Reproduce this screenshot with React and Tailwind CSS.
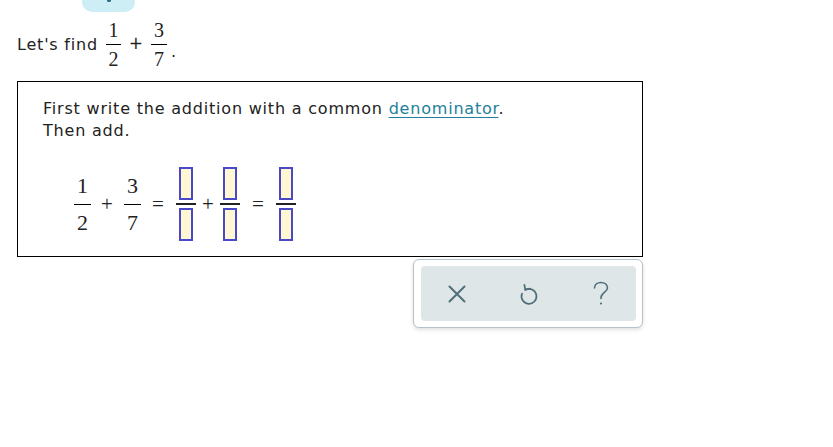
import React from "react";

const serif = { fontFamily: '"Liberation Serif", "Times New Roman", serif' };

function Frac({ n, d, w, gap, cls = "" }) {
  return (
    <span className={`inline-flex flex-col items-center ${gap} ${cls}`} style={serif}>
      <span className="leading-none">{n}</span>
      <span className={`h-px bg-black ${w}`} />
      <span className="leading-none">{d}</span>
    </span>
  );
}

function BoxFrac({ cls = "" }) {
  return (
    <span className={`inline-flex flex-col items-center gap-[3px] w-[20px] ${cls}`}>
      <span className="w-[14px] h-[33px] border-2 border-[#4a48c4] bg-[#fff8d2]" />
      <span className="h-[2px] bg-[#222] w-[20px]" />
      <span className="w-[14px] h-[33px] border-2 border-[#4a48c4] bg-[#fff8d2]" />
    </span>
  );
}

function Op({ c, cls }) {
  return (
    <span className={`w-[14px] flex justify-center text-[21px] leading-none ${cls}`} style={serif}>
      {c}
    </span>
  );
}

export default function App() {
  return (
    <div
      className="w-[833px] h-[447px] bg-white text-[#222] relative overflow-hidden"
      style={{ fontFamily: '"DejaVu Sans", Verdana, sans-serif' }}
    >
      <div className="absolute left-[82px] top-[-10px] w-[53px] h-[22px] rounded-[10px] bg-[#cdeef5] flex items-end justify-center pb-[10px]">
        <span className="w-[4px] h-[3px] rounded-full bg-[#2a6f80]" />
      </div>

      <div className="pt-[17px] pl-[17px] h-[72px] flex items-center text-[16px] tracking-[0.8px]">
        <span>Let's find</span>
        <span className="ml-[8px] text-[20px] flex items-center tracking-normal">
          <Frac n="1" d="2" w="w-[15px]" gap="gap-[4px]" />
          <span className="w-[14px] mx-[8px] flex justify-center text-[17px] leading-none mb-[2px]">+</span>
          <Frac n="3" d="7" w="w-[16px]" gap="gap-[4px]" />
          <span className="ml-[4px] mt-[14px] text-[16px] leading-none">.</span>
        </span>
      </div>

      <div className="ml-[17px] mt-[9px] w-[626px] h-[176px] border border-black pl-[25px] pt-[16px]">
        <p className="text-[16px] leading-[22px] tracking-[0.8px]">
          First write the addition with a common{" "}
          <span className="text-[#23809a] underline underline-offset-[3px]">denominator</span>.
          <br />
          Then add.
        </p>
        <div className="mt-[25px] ml-[31px] h-[74px] flex items-center text-[22px]">
          <Frac n="1" d="2" w="w-[17px]" gap="gap-[7px]" />
          <Op c="+" cls="ml-[9px]" />
          <Frac n="3" d="7" w="w-[17px]" gap="gap-[7px]" cls="ml-[10px]" />
          <Op c="=" cls="ml-[10px]" />
          <BoxFrac cls="ml-[11px]" />
          <Op c="+" cls="ml-[5px]" />
          <BoxFrac cls="ml-[5px]" />
          <Op c="=" cls="ml-[11px]" />
          <BoxFrac cls="ml-[11px]" />
        </div>
      </div>

      <div className="ml-[413px] mt-[2px] w-[230px] h-[69px] rounded-[6px] border border-[#b6c2c7] bg-white pl-[7px] pr-[6px] py-[6px] shadow-[0_2px_4px_rgba(0,0,0,0.12)]">
        <div className="w-full h-full rounded-[4px] bg-[#dfe6e8] flex items-center justify-around text-[#4f6f78]">
          <svg width="18" height="18" viewBox="0 0 18 18" fill="none" stroke="currentColor" strokeWidth="2" strokeLinecap="round">
            <path d="M1.5 1.5 L16.5 16.5 M16.5 1.5 L1.5 16.5" />
          </svg>
          <svg width="20" height="24" viewBox="0 0 20 24" fill="none" stroke="currentColor" strokeWidth="1.7" strokeLinecap="round" strokeLinejoin="round">
            <path d="M6.3 7.8 A7.5 7.5 0 1 1 3 11.6" />
            <path d="M5.4 2.8 L6.3 7.8 L11 6.6" />
          </svg>
          <svg width="16" height="26" viewBox="0 0 16 26" fill="none" stroke="currentColor" strokeWidth="1.6" strokeLinecap="round">
            <path d="M1.5 7 C1.5 3.5 4.5 1.5 8 1.5 C11.5 1.5 14.5 3.5 14.5 7 C14.5 11 8 12 8 16.5 L8 17.5" />
            <circle cx="8" cy="22.5" r="1.1" fill="currentColor" stroke="none" />
          </svg>
        </div>
      </div>
    </div>
  );
}
